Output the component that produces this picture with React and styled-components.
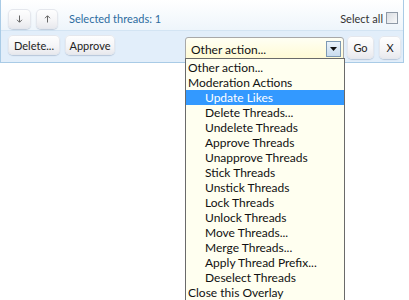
import React from "react";
import styled, { createGlobalStyle } from "styled-components";

const Global = createGlobalStyle`
  html, body, #root {
    min-height: 300px;
  }
  body {
    margin: 0;
    background: #ffffff;
    font-family: Lato, "Liberation Sans", Arial, sans-serif;
  }
`;

const Panel = styled.div`
  width: 404px;
  border: 1px solid #a9cbe6;
  border-top: none;
  display: flex;
  flex-direction: column;
  box-sizing: border-box;
`;

const TopRow = styled.div`
  height: 31px;
  box-sizing: border-box;
  display: flex;
  align-items: flex-start;
  padding: 9px 5px 0 7px;
  background: linear-gradient(to bottom, #ffffff 0%, #eef5fb 100%);
  border-bottom: 1px solid #d3e4f3;
`;

const BottomRow = styled.div`
  height: 31px;
  box-sizing: border-box;
  display: flex;
  align-items: flex-start;
  padding: 4px 1px 0 7px;
  background: #e2eefa;
`;

const Button = styled.button`
  height: ${(p) => p.h || 20}px;
  width: ${(p) => p.w}px;
  margin-top: ${(p) => p.top || 0}px;
  margin-right: ${(p) => (p.gap === undefined ? 5 : p.gap)}px;
  padding: 0;
  border: none;
  border-radius: 5px;
  background: linear-gradient(to bottom, #ffffff 0%, #f5f5f7 55%, #e7e8ed 100%);
  box-shadow: 0 1px 1px rgba(120, 140, 170, 0.4), inset 0 0 0 1px #e4e7ed;
  font-family: Lato, "Liberation Sans", Arial, sans-serif;
  font-size: 11px;
  color: #222;
  cursor: pointer;
  display: flex;
  align-items: center;
  justify-content: center;
`;

const Label = styled.span`
  font-size: 11px;
  line-height: 20px;
  color: #2d6c9f;
  margin-left: 6px;
`;

const Spacer = styled.div`
  flex: 1;
`;

const SelectAll = styled.label`
  display: flex;
  align-items: center;
  height: 18px;
  font-size: 11px;
  color: #333;
  gap: 3px;
`;

const Check = styled.span`
  width: 10px;
  height: 10px;
  border: 1px solid #8f9aa7;
  background: linear-gradient(135deg, #d9dde2 0%, #f8f9fa 100%);
`;

const SelectWrap = styled.div`
  position: relative;
  margin-left: 65px;
  margin-right: 3px;
  margin-top: 2px;
`;

const SelectBox = styled.div`
  width: 159px;
  height: 24px;
  box-sizing: border-box;
  border: 1px solid #a8a8a8;
  border-radius: 3px 3px 0 0;
  background: linear-gradient(to bottom, #fffff4 0%, #fffad2 100%);
  display: flex;
  align-items: center;
  padding-left: 5px;
  font-size: 12px;
  color: #111;
`;

const Arrow = styled.span`
  margin-left: auto;
  margin-right: 2px;
  width: 15px;
  height: 16px;
  box-sizing: border-box;
  border: 1px solid #7d99b4;
  background: linear-gradient(to bottom, #eaf3fb 0%, #c9dcee 100%);
  display: flex;
  align-items: center;
  justify-content: center;
`;

const List = styled.ul`
  position: absolute;
  top: 21px;
  left: 0;
  width: 160px;
  box-sizing: border-box;
  margin: 0;
  padding: 1px 0 0;
  list-style: none;
  border: 1px solid #6a6a6a;
  border-bottom: none;
  background: #fffff0;
  z-index: 5;
`;

const Item = styled.li`
  height: 15px;
  line-height: 15px;
  font-size: 12px;
  padding-left: ${(p) => (p.$indent ? 19 : 2)}px;
  background: ${(p) => (p.$active ? "#3399ff" : "transparent")};
  color: ${(p) => (p.$active ? "#ffffff" : "#111")};
  white-space: nowrap;
`;

const items = [
  { t: "Other action..." },
  { t: "Moderation Actions" },
  { t: "Update Likes", indent: true, active: true },
  { t: "Delete Threads...", indent: true },
  { t: "Undelete Threads", indent: true },
  { t: "Approve Threads", indent: true },
  { t: "Unapprove Threads", indent: true },
  { t: "Stick Threads", indent: true },
  { t: "Unstick Threads", indent: true },
  { t: "Lock Threads", indent: true },
  { t: "Unlock Threads", indent: true },
  { t: "Move Threads...", indent: true },
  { t: "Merge Threads...", indent: true },
  { t: "Apply Thread Prefix...", indent: true },
  { t: "Deselect Threads", indent: true },
  { t: "Close this Overlay" },
];

const ArrowIcon = ({ up }) => (
  <svg width="7" height="8" viewBox="0 0 7 8">
    <g stroke="#666" strokeWidth="1" fill="none" transform={up ? "rotate(180 3.5 4)" : undefined}>
      <path d="M3.5 0.5 V7" />
      <path d="M1 4.8 L3.5 7.3 L6 4.8" />
    </g>
  </svg>
);

export default function App() {
  return (
    <>
      <Global />
      <Panel>
        <TopRow>
          <Button w={23}>
            <ArrowIcon />
          </Button>
          <Button w={22}>
            <ArrowIcon up />
          </Button>
          <Label>Selected threads: 1</Label>
          <Spacer />
          <SelectAll>
            Select all <Check />
          </SelectAll>
        </TopRow>
        <BottomRow>
          <Button w={52}>Delete...</Button>
          <Button w={50}>Approve</Button>
          <SelectWrap>
            <SelectBox>
              Other action...
              <Arrow>
                <svg width="7" height="4" viewBox="0 0 7 4">
                  <path d="M0 0 L7 0 L3.5 4 Z" fill="#111" />
                </svg>
              </Arrow>
            </SelectBox>
            <List>
              {items.map((it) => (
                <Item key={it.t} $indent={it.indent} $active={it.active}>
                  {it.t}
                </Item>
              ))}
            </List>
          </SelectWrap>
          <Button w={27} h={23} top={1}>Go</Button>
          <Button w={22} h={23} top={1} gap={0}>X</Button>
        </BottomRow>
      </Panel>
    </>
  );
}
